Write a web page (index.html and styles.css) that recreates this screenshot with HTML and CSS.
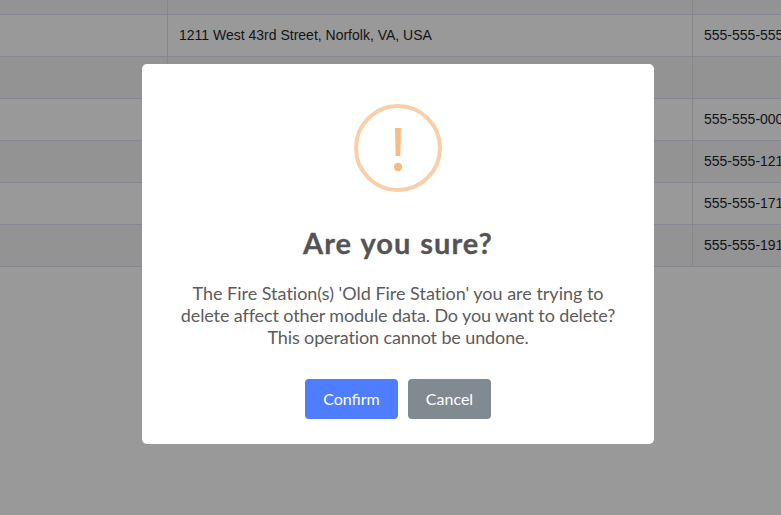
FILE: index.html
```html
<!DOCTYPE html>
<html lang="en">
<head>
<meta charset="utf-8">
<title>Fire Stations</title>
<link rel="stylesheet" href="styles.css">
</head>
<body>
<main class="stations">
  <div class="row first"><div></div><div></div><div></div></div>
  <div class="row"><div></div><div>1211 West 43rd Street, Norfolk, VA, USA</div><div>555-555-555</div></div>
  <div class="row"><div></div><div></div><div></div></div>
  <div class="row"><div></div><div></div><div>555-555-000</div></div>
  <div class="row"><div></div><div></div><div>555-555-121</div></div>
  <div class="row"><div></div><div></div><div>555-555-171</div></div>
  <div class="row"><div></div><div></div><div>555-555-191</div></div>
</main>
<div class="overlay">
  <section class="dialog" role="dialog" aria-labelledby="title">
    <svg class="warning" viewBox="0 0 88 88" aria-hidden="true">
      <circle cx="44" cy="44" r="42" fill="none" stroke="#facea8" stroke-width="4"/>
      <path d="M41 24h6l-.6 28h-4.8z" fill="#f8bb86"/>
      <circle cx="44" cy="63" r="4.2" fill="#f8bb86"/>
    </svg>
    <h2 class="title" id="title">Are you sure?</h2>
    <p class="message"><span class="lead">The Fire Station(s) 'Old Fire Station' you are trying to</span><br>delete affect other module data. Do you want to delete?<br>This operation cannot be undone.</p>
    <div class="actions">
      <button class="button confirm">Confirm</button>
      <button class="button cancel">Cancel</button>
    </div>
  </section>
</div>
</body>
</html>
```
FILE: styles.css
```css
* { box-sizing: border-box; }
body {
  margin: 0;
  height: 515px;
  overflow: hidden;
  background: #999;
  font-family: Lato, sans-serif;
}
.stations { width: 100%; overflow: hidden; }
.row {
  display: grid;
  grid-template-columns: 168px 525px 88px;
  height: 42px;
  border-bottom: 1px solid #87878f;
  font: 14px/41px "Liberation Sans", Arial, sans-serif;
  color: #111416;
}
.row.first { height: 15px; }
.row:nth-child(odd) { background: #939393; }
.row > div { padding-left: 11px; white-space: nowrap; border-right: 1px solid #87878b; }
.row > div:last-child { border-right: 0; }
.overlay {
  position: fixed;
  inset: 0;
  display: flex;
  justify-content: center;
  align-items: flex-start;
  padding: 64px 0 0 15px;
}
.dialog {
  display: flex;
  flex-direction: column;
  align-items: center;
  width: 512px;
  height: 380px;
  padding-top: 40px;
  border-radius: 5px;
  background: #fff;
}
.warning { width: 88px; height: 88px; }
.title {
  margin: 31px 0 0;
  font: 700 29px/40px Lato, sans-serif;
  letter-spacing: 1px;
  word-spacing: 1px;
  color: #545454;
  -webkit-text-stroke: .3px #545454;
  stroke-linejoin: round;
  white-space: nowrap;
}
.message {
  margin: 19px 0 0;
  font-size: 18px;
  line-height: 22px;
  letter-spacing: -.12px;
  color: #5c5c5c;
  text-align: center;
  white-space: nowrap;
}
.lead { letter-spacing: -.01px; }
.actions { display: flex; gap: 10px; margin-top: 31px; }
.button {
  height: 40px;
  padding: 0 0 2px;
  border: 0;
  border-radius: 4px;
  color: #fff;
  font: 16px Lato, sans-serif;
}
.confirm { width: 93px; background: #4e7eff; }
.cancel { width: 83px; background: #828a91; }
```
